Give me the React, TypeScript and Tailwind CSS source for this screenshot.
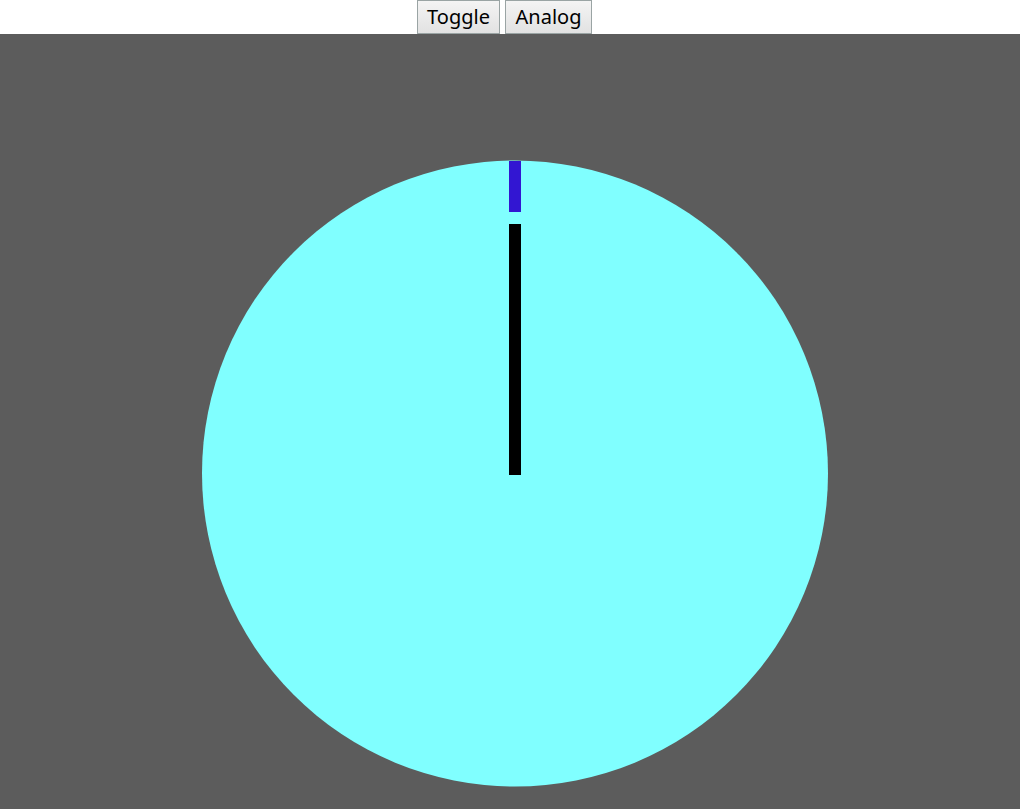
export default function App() {
  return (
    <div className="flex h-[809px] w-[1020px] flex-col overflow-hidden bg-white font-['Noto_Sans',sans-serif]">
      <div className="flex h-[34px] justify-center gap-[5px] pr-[11px]">
        <button
          type="button"
          className="h-[34px] w-[83px] border border-[#9aa4a4] bg-gradient-to-b from-[#f4f4f4] to-[#e2e2e2] text-[20px] leading-none text-black"
        >
          Toggle
        </button>
        <button
          type="button"
          className="h-[34px] w-[87px] border border-[#9aa4a4] bg-gradient-to-b from-[#f4f4f4] to-[#e2e2e2] text-[20px] leading-none text-black"
        >
          Analog
        </button>
      </div>
      <div className="h-[775px] w-[1020px] bg-[#5c5c5c]">
        <svg width="1020" height="775" viewBox="0 0 1020 775">
          <circle cx="515" cy="439.5" r="313" fill="#80ffff" />
          <rect x="509" y="127" width="12" height="51" fill="#3216d2" />
          <rect x="509" y="190" width="12" height="251" fill="#000000" />
        </svg>
      </div>
    </div>
  );
}
